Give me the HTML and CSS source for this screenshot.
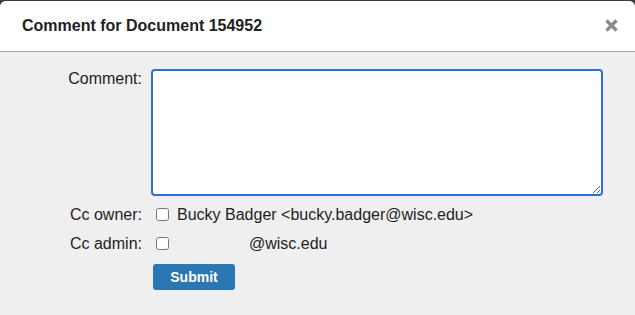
FILE: index.html
```html
<!DOCTYPE html>
<html lang="en">
<head>
    <meta charset="UTF-8">
    <meta name="viewport" content="width=device-width, initial-scale=1.0">
    <title>Comment for Document 154952</title>
    <link rel="stylesheet" href="styles.css">
</head>
<body>
    <div class="dialog">
        <div class="dialog-header">
            <h1>Comment for Document 154952</h1>
            <button class="close-btn" title="Close">
                <svg width="15" height="15" viewBox="0 0 15 15">
                    <path d="M2.5 2.5 L12.5 12.5 M12.5 2.5 L2.5 12.5" stroke="currentColor" stroke-width="3.2" stroke-linecap="butt"/>
                </svg>
            </button>
        </div>
        <form class="dialog-body" onsubmit="return false;">
            <label class="field-label" for="comment">Comment:</label>
            <textarea id="comment" class="comment-box" autofocus></textarea>

            <span class="field-label">Cc owner:</span>
            <label class="check-row">
                <input type="checkbox" class="check">
                <span>Bucky Badger &lt;bucky.badger@wisc.edu&gt;</span>
            </label>

            <span class="field-label">Cc admin:</span>
            <label class="check-row">
                <input type="checkbox" class="check">
                <span class="admin-email">@wisc.edu</span>
            </label>

            <span></span>
            <div>
                <button type="submit" class="btn-submit">Submit</button>
            </div>
        </form>
    </div>
</body>
</html>
```

FILE: styles.css
```css
body {
    font-family: 'Liberation Sans', Arial, sans-serif;
    background-color: #3a3a3a;
    margin: 0;
    padding-top: 1px;
    height: 100vh;
    box-sizing: border-box;
    overflow: hidden;
}

.dialog {
    background-color: #efefef;
    border-radius: 6px 6px 0 0;
    height: 100%;
    overflow: hidden;
}

.dialog-header {
    display: flex;
    align-items: center;
    justify-content: space-between;
    height: 50px;
    padding: 0 16px 0 22px;
    background-color: #fff;
    border-bottom: 1px solid #a5a5a5;
}

.dialog-header h1 {
    margin: 0;
    font-size: 16px;
    font-weight: bold;
    color: #222;
}

.close-btn {
    display: flex;
    border: none;
    background: none;
    padding: 0;
    margin-top: -1px;
    color: #8a8a8a;
    cursor: pointer;
}

.dialog-body {
    display: grid;
    grid-template-columns: 142px 1fr;
    column-gap: 9px;
    row-gap: 9px;
    padding: 17px 32px 0 0;
    font-size: 16px;
    color: #1e1e1e;
}

.field-label {
    text-align: right;
    line-height: 20px;
}

.comment-box {
    height: 127px;
    box-sizing: border-box;
    border: 2px solid #2d6fd2;
    border-radius: 4px;
    background-color: #fff;
    outline: none;
    font-family: inherit;
    font-size: 14px;
    padding: 4px 6px;
    resize: vertical;
}

.check-row {
    display: flex;
    align-items: center;
    line-height: 20px;
    margin-top: -1px;
}

.check {
    width: 13px;
    height: 13px;
    margin: 0 8px 0 5px;
}

.admin-email {
    padding-left: 72px;
}

.btn-submit {
    margin: 1px 0 0 2px;
    width: 82px;
    height: 26px;
    background-color: #2b77b4;
    color: #fff;
    border: none;
    border-radius: 3px;
    font-family: inherit;
    font-size: 14px;
    font-weight: bold;
    cursor: pointer;
}
```
